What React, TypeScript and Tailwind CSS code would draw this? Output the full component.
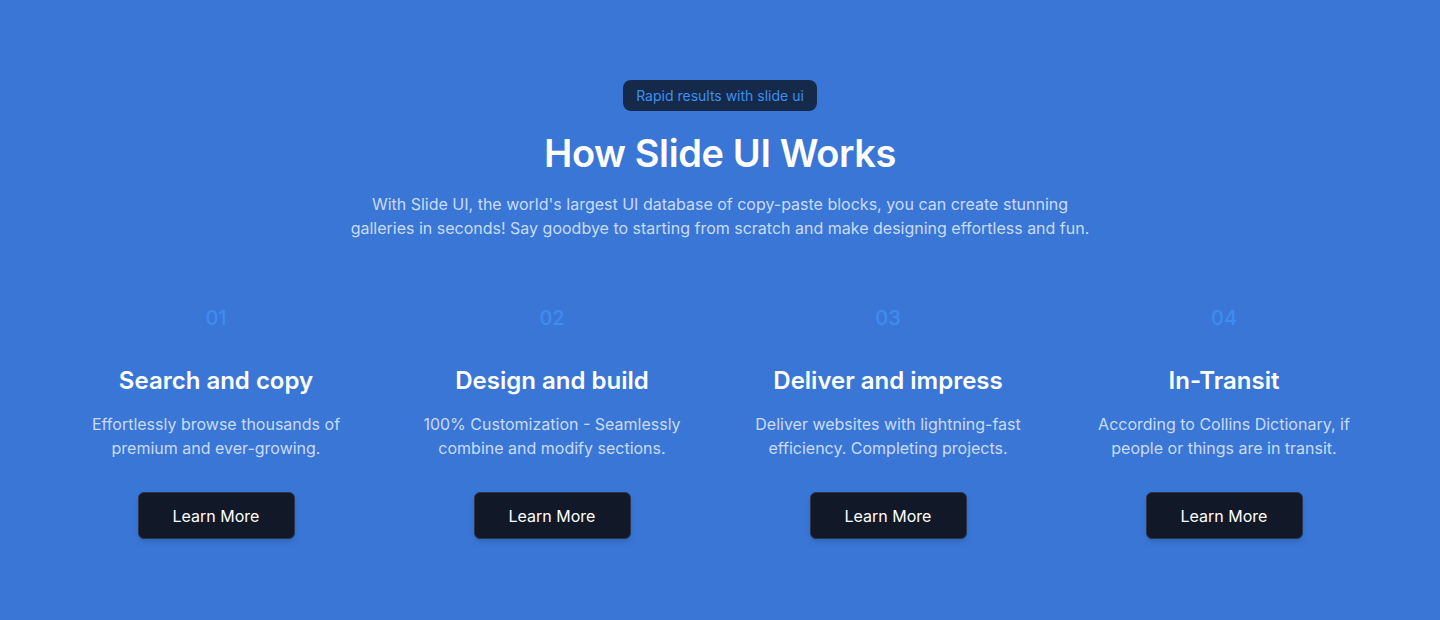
const steps = [
  {
    num: "01",
    title: "Search and copy",
    text: "Effortlessly browse thousands of premium and ever-growing.",
  },
  {
    num: "02",
    title: "Design and build",
    text: "100% Customization - Seamlessly combine and modify sections.",
  },
  {
    num: "03",
    title: "Deliver and impress",
    text: "Deliver websites with lightning-fast efficiency. Completing projects.",
  },
  {
    num: "04",
    title: "In-Transit",
    text: "According to Collins Dictionary, if people or things are in transit.",
  },
]

export default function App() {
  return (
    <div
      className="min-h-[620px] bg-[#3a76d6] px-12 pt-20"
      style={{ fontFamily: "Inter, 'Noto Sans', sans-serif" }}
    >
      <div className="flex flex-col items-center text-center">
        <span className="rounded-lg bg-[#152a4b] px-[13px] py-[5px] text-sm leading-[21px] text-[#3d8ff0]">
          Rapid results with slide ui
        </span>
        <h1 className="mt-[18px] text-[38px] font-semibold leading-[48px] tracking-[-0.01em] text-white">
          How Slide UI Works
        </h1>
        <p className="mt-[15px] max-w-[760px] text-base leading-6 text-[#c9dbf6]">
          With Slide UI, the world's largest UI database of copy-paste blocks, you can create stunning
          galleries in seconds! Say goodbye to starting from scratch and make designing effortless and fun.
        </p>
      </div>

      <div className="mt-16 grid grid-cols-4">
        {steps.map((s) => (
          <div key={s.num} className="flex flex-col items-center text-center">
            <span className="text-xl font-medium leading-7 text-[#3f8cf0]">{s.num}</span>
            <h3 className="mt-[33px] text-2xl font-semibold leading-8 text-white">{s.title}</h3>
            <p className="mt-[15px] max-w-72 text-base leading-6 text-[#c9dbf6]">{s.text}</p>
            <button className="mt-8 h-[47px] w-[157px] rounded-md border border-[#2a3550] bg-[#111827] text-base text-white shadow-md">
              Learn More
            </button>
          </div>
        ))}
      </div>
    </div>
  )
}
